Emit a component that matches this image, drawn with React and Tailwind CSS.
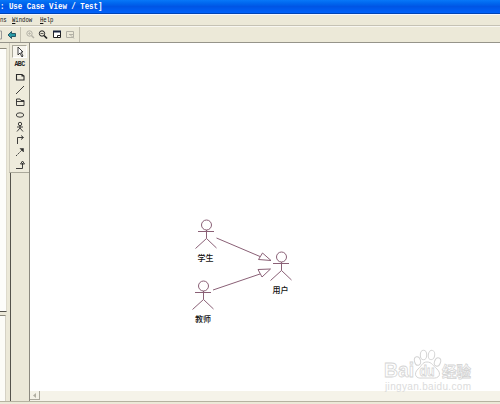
const INK = '#2a2a2a';

function Actor({ name, className }) {
  return (
    <div className={`absolute flex w-[24px] flex-col items-center ${className}`}>
      <svg width="24" height="31" viewBox="0 0 24 31" fill="none" stroke="#8a6076" strokeWidth="1">
        <circle cx="12.500" cy="6" r="5" />
        <path d="M12.500 11V19.500M4 12.500H20M1.500 29.500L12.500 19.500L22.500 29" />
      </svg>
      <span className="mt-[4px] whitespace-nowrap text-[8px] font-medium leading-[10px] text-[#111]">{name}</span>
    </div>
  );
}

function Watermark() {
  return (
    <svg className="absolute left-[383px] top-[348px]" width="94" height="47" viewBox="0 0 94 47" fill="#fff" stroke="#d4d4d4" strokeWidth="1">
      <ellipse cx="34.500" cy="13" rx="3" ry="4.300" transform="rotate(-15 34.500 13)" />
      <ellipse cx="40.500" cy="7" rx="3.200" ry="4.700" />
      <ellipse cx="48.500" cy="7" rx="3.200" ry="4.700" transform="rotate(10 48.500 7)" />
      <ellipse cx="54.500" cy="14" rx="3" ry="4.300" transform="rotate(20 54.500 14)" />
      <path d="M44 14C39 14 39 18 35 21C30 26 33 31 39 30H49C56 31 59 26 54 21C50 18 49 14 44 14Z" />
      <g fontFamily="Liberation Sans, Noto Sans CJK SC, sans-serif" fontWeight="bold" strokeWidth=".8">
        <text x="1" y="29" fontSize="20" textLength="30" lengthAdjust="spacingAndGlyphs">Bai</text>
        <text x="36.500" y="28" fontSize="14" textLength="15" lengthAdjust="spacingAndGlyphs">du</text>
        <text x="59" y="28.500" fontSize="15" textLength="29" lengthAdjust="spacingAndGlyphs">经验</text>
        <text x="2" y="42" fontSize="10" textLength="86" stroke="none" fill="#dcdcdc" fontWeight="normal">jingyan.baidu.com</text>
      </g>
    </svg>
  );
}

function Tool({ children }) {
  return (
    <svg className="shrink-0" width="14" height="12" viewBox="0 0 14 12" fill="none" stroke={INK} strokeWidth=".9">
      {children}
    </svg>
  );
}

export default function App() {
  return (
    <div className="relative flex h-[404px] w-[500px] flex-col overflow-hidden bg-[#ece9d8] font-['Liberation_Mono','Noto_Sans_CJK_SC',monospace]">
      <header className="h-[14px] shrink-0 border-b border-[#0044b4] bg-linear-to-b from-[#0878f8] via-[#0055e5] to-[#0062fa]">
        <div className="w-max origin-left scale-x-[.825] whitespace-pre pt-px text-[9px] font-bold leading-[12px] text-white">: Use Case View / Test]</div>
      </header>
      <nav className="flex h-[12px] shrink-0 border-b border-t border-b-[#c5c2b5] border-t-[#f5f7ff] text-[7px] leading-[10px] text-[#111]">
        <span className="w-[12px] origin-left scale-x-[.8]">ns</span>
        <span className="w-[27.500px] origin-left scale-x-[.8]"><u>W</u>indow</span>
        <span className="origin-left scale-x-[.8]"><u>H</u>elp</span>
      </nav>
      <div className="flex h-[17px] shrink-0 items-center border-b border-t border-b-[#96948a] border-t-[#f8f7f1]">
        <svg width="82" height="15" viewBox="0 0 82 15" fill="none" stroke="#222">
          <path d="M0 4H1.500V12H0" stroke="#999" />
          <path d="M8 8L11.500 4.500V6.500H15.500V9.500H11.500V11.500Z" fill="#289aa5" stroke="#1d4d5c" strokeWidth=".9" />
          <path d="M20.500 0V15M79.500 0V15" stroke="#c3c0b0" />
          <g stroke="#b3b1a6"><circle cx="29.500" cy="6.500" r="2.700" /><path d="M31.500 8.500L34 11" strokeWidth="1.500" /><path d="M28 6.500H31M29.500 5V8" strokeWidth=".7" /></g>
          <circle cx="42" cy="6.500" r="2.700" /><path d="M44 8.500L47 11.500" strokeWidth="1.700" /><path d="M40.500 6.500H43.500" strokeWidth=".7" />
          <path d="M53.500 4.500H60.500V10.500H53.500Z" fill="#fff" /><path d="M53 4.500H61" stroke="#17223d" strokeWidth="2" /><path d="M57.500 11V8.500H60.500" />
          <path d="M66.500 4.500H73.500V10.500H66.500ZM69 7.500H73M70.500 8L74 11.500" stroke="#b3b1a6" />
        </svg>
      </div>
      <div className="flex min-h-0 flex-1">
        <aside className="flex w-[9px] shrink-0 flex-col">
          <div className="mt-[5px] h-[264px] w-[7px] border-b border-r border-t border-b-[#55534c] border-r-[#dedbcd] border-t-[#8d8a7c] bg-[#fdfdfa]" />
          <div className="mt-[3px] h-[86px] w-[6px] border-r border-t border-r-[#d5d2c5] border-t-[#8d8a7c] bg-[#fcfcf7]" />
        </aside>
        <aside className="flex w-[21px] shrink-0 flex-col border-r border-[#8b897f]">
          <div className="flex h-[130px] w-full shrink-0 flex-col items-center gap-[0.500px] border-b border-l border-b-[#aaa89a] border-l-[#cfccbd] bg-[#eeebdc] pt-[2px]">
            <div className="flex h-[13px] w-[15px] items-center justify-center border-b border-r border-b-white border-r-white border-l border-t border-l-[#aaa89a] border-t-[#aaa89a] bg-[#f7f5ed]">
              <Tool><path d="M5 1V9L7 7L9 11L10 10L8 6H10Z" fill="#fff" /></Tool>
            </div>
            <div className="h-[12px] text-[6.500px] font-bold leading-[12px] tracking-[-0.6px] text-[#222]">ABC</div>
            <Tool><path d="M3.500 3.500H9L11 5V9H3.500ZM9 3V5H11" strokeWidth="1.100" /></Tool>
            <Tool><path d="M3 10L11 2" /></Tool>
            <Tool><path d="M3.500 9.500V3H7L8 4.500H11V9.500ZM3.500 5.500H11" /></Tool>
            <Tool><ellipse cx="7" cy="6" rx="3.700" ry="2.200" /></Tool>
            <Tool><circle cx="7" cy="3" r="1.700" /><path d="M7 5V7M4 6H10M4 10.500L7 7L10 10.500" /></Tool>
            <Tool><path d="M4.500 10V3.500H10M8 1.500L10.500 3.500L8 5.500" /></Tool>
            <Tool><path d="M3 10L10 3" strokeDasharray="2 1" /><path d="M7 2.500H10.500V6Z" fill={INK} strokeWidth=".5" /></Tool>
            <Tool><path d="M3 9.500H9.500V4M7.500 5L9.500 2L11.500 5Z" /></Tool>
          </div>
          <div className="ml-px flex-1 border-l border-[#55534c] bg-[#ebe8d8]" />
        </aside>
        <main className="flex flex-1 flex-col bg-white">
          <div className="flex-1" />
          <div className="h-[10px] bg-[#f5f3e9]">
            <div className="flex h-[9px] w-[10px] items-center justify-center border-b border-r border-[#aaa89c] bg-[#f4f2e7]">
              <svg width="5" height="5" viewBox="0 0 5 5"><path d="M1 2.500L4 0V5Z" fill="#b1afa2" /></svg>
            </div>
          </div>
        </main>
      </div>
      <footer className="h-[3px] shrink-0 border-t border-[#b6b3a1]" />

      <svg className="absolute left-0 top-0" width="500" height="404" fill="none" stroke="#8a6076">
        <path d="M216.500 238L260 256.500M258.500 259.500L262.500 253L271 260.500ZM213 290L260 274M258 269.500L270.500 269L262 277Z" />
      </svg>
      <Actor name="学生" className="left-[193.500px] top-[219px]" />
      <Actor name="用户" className="left-[268.500px] top-[251px]" />
      <Actor name="教师" className="left-[191px] top-[280px]" />
      <Watermark />
    </div>
  );
}
